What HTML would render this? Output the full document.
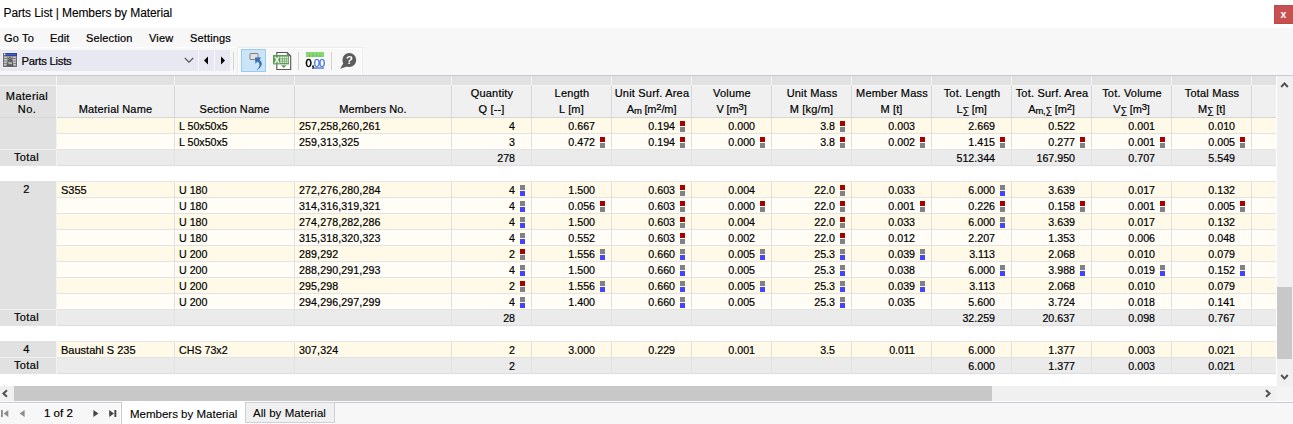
<!DOCTYPE html><html><head><meta charset="utf-8"><title>Parts List | Members by Material</title><style>
*{box-sizing:border-box;margin:0;padding:0}
html,body{width:1293px;height:424px;overflow:hidden;background:#f7f7f7}
body{position:relative;font-family:"Liberation Sans",sans-serif;font-size:11px;color:#000}
.a{position:absolute}
.t{position:absolute;white-space:pre;line-height:14px;height:14px;-webkit-text-stroke:.2px #000}
.lbl{font-size:11px;letter-spacing:.15px}
.num{font-size:10.67px;text-align:right}
.c{text-align:center}
.title{font-size:12px;letter-spacing:-.1px;-webkit-text-stroke:.1px #000}
.menu{font-size:11px;letter-spacing:.15px}
.r{background:#a80000}.g{background:#808286}.b{background:#4444ff}
.m{position:absolute;width:5px;height:5px}
.sb{font-size:9.5px;position:relative;top:1px;letter-spacing:-.3px}.sp{font-size:9.5px;position:relative;top:-3px}</style></head><body>
<div class="a" style="left:0px;top:0px;width:1293px;height:28px;background:#fff;"></div>
<div class="t title" style="left:3.5px;top:6px;">Parts List | Members by Material</div>
<div class="a" style="left:1274px;top:5px;width:19px;height:19px;background:#c75050;border:1px solid #bd4a4a;border-right:none;color:#fff;font-weight:bold;font-size:10.5px;text-align:center;line-height:17px;padding-right:1px">x</div>
<div class="t menu" style="left:4px;top:31px;">Go To</div>
<div class="t menu" style="left:50px;top:31px;">Edit</div>
<div class="t menu" style="left:86px;top:31px;">Selection</div>
<div class="t menu" style="left:149px;top:31px;">View</div>
<div class="t menu" style="left:190px;top:31px;">Settings</div>
<div class="a" style="left:0px;top:47px;width:363px;height:1px;background:#fdfdfd;"></div>
<div class="a" style="left:0px;top:50px;width:198px;height:21px;background:#e8e8f3;"></div>
<div class="a" style="left:199px;top:50px;width:15px;height:21px;background:#e8e8f3;"></div>
<div class="a" style="left:215px;top:50px;width:15px;height:21px;background:#e8e8f3;"></div>
<svg class="a" style="left:2px;top:52px" width="16" height="16" viewBox="0 0 16 16"><rect x="0" y="0" width="16" height="16" fill="#f1f1f9"/><rect x="1" y="1" width="14" height="14" fill="#6a6a6a"/><rect x="3.6" y="1" width="11.4" height="2.7" fill="#2233a8"/><rect x="4" y="1.8" width="10" height="1" fill="#4a6ad0"/><rect x="2" y="1.6" width="1.4" height="1.4" fill="#e8e8e8"/><g fill="#c2c2c2"><rect x="2" y="4.4" width="12" height="1.8"/><rect x="2" y="6.9" width="12" height="1.8"/><rect x="2" y="9.4" width="12" height="1.8"/><rect x="2" y="11.9" width="12" height="1.8"/></g><rect x="5.2" y="4" width="0.8" height="10" fill="#858585"/><rect x="10" y="4" width="0.8" height="10" fill="#858585"/><path d="M4.4 14.2 L6.2 7.2 H9.8 L11.6 14.2 Z" fill="#5a5a5a"/><circle cx="8" cy="6.2" r="1.6" fill="#5a5a5a"/><circle cx="8" cy="6.1" r="0.6" fill="#c8c8c8"/><rect x="6.6" y="9.6" width="1" height="2.6" fill="#e4e4e4"/><rect x="8.2" y="10.3" width="1.6" height="1.9" fill="#d4d4d4"/></svg>
<div class="t lbl" style="left:21.5px;top:54px;letter-spacing:-.25px;font-size:11.3px">Parts Lists</div>
<svg class="a" style="left:184px;top:57px" width="10" height="7" viewBox="0 0 10 7"><path d="M0.8 1 L5 5.2 L9.2 1" fill="none" stroke="#555" stroke-width="1.1"/></svg>
<svg class="a" style="left:203px;top:56px" width="6" height="9" viewBox="0 0 6 9"><path d="M5 0.5 L1 4.5 L5 8.5 Z" fill="#000"/></svg>
<svg class="a" style="left:220px;top:56px" width="6" height="9" viewBox="0 0 6 9"><path d="M1 0.5 L5 4.5 L1 8.5 Z" fill="#000"/></svg>
<div class="a" style="left:233px;top:52px;width:1px;height:18px;background:#d4d4d4;"></div>
<div class="a" style="left:237px;top:47px;width:126px;height:28px;background:#f8f8f8;border:1px solid #ececec;border-bottom:none;box-shadow:inset 1px 1px 0 #fff,inset -1px 0 0 #fff"></div>
<div class="a" style="left:267px;top:48px;width:1px;height:27px;background:#fff;"></div>
<div class="a" style="left:241px;top:49px;width:25px;height:23px;background:#cce4f7;border:1px solid #99ccf5"></div>
<svg class="a" style="left:241px;top:49px" width="25" height="23" viewBox="0 0 25 23"><rect x="9" y="4.5" width="8" height="6" rx="0.5" fill="#e2e2e2" stroke="#808080" stroke-width="1"/><path d="M14 8.6 L20.2 8.4 L18.5 10.7 C21.9 13.6 22.1 17.5 15.2 21.3 C19.4 17.6 19.2 14.6 16.7 12.5 L14.4 14.7 Z" fill="#3b6fb0"/></svg>
<svg class="a" style="left:272px;top:51px;will-change:transform" width="20" height="20" viewBox="0 0 20 20"><path d="M4.8 1.5 H15.3 L18.7 4.9 V18.5 H4.8 Z" fill="#fff" stroke="#555" stroke-width="1.1"/><path d="M15.3 1.8 V4.9 H18.5 Z" fill="#8a8a8a" stroke="#555" stroke-width="0.7"/><rect x="1" y="4" width="16" height="9.4" fill="#5f9956"/><text transform="translate(2.5 12.1) scale(0.8 1)" font-family="Liberation Sans,sans-serif" font-weight="bold" font-size="9.3" fill="#fff" stroke="#fff" stroke-width="0.35">X</text><rect x="8.2" y="5.6" width="8" height="6.3" fill="#e3efe0"/><g fill="#6aa262"><rect x="10" y="5.6" width="0.6" height="6.3"/><rect x="12" y="5.6" width="0.6" height="6.3"/><rect x="14" y="5.6" width="0.6" height="6.3"/><rect x="8.2" y="7.1" width="8" height="0.55"/><rect x="8.2" y="8.7" width="8" height="0.55"/><rect x="8.2" y="10.3" width="8" height="0.55"/></g><path d="M9 14.3 H14.6 L11.8 17 Z" fill="#5f9956"/></svg>
<div class="a" style="left:298px;top:52px;width:1px;height:18px;background:#d4d4d4;"></div>
<svg class="a" style="left:305px;top:51px;will-change:transform" width="20" height="19" viewBox="0 0 20 19"><rect x="1" y="1" width="18" height="5" fill="#86d676"/><g fill="#6cb85e"><rect x="4" y="3.5" width="1" height="2.5"/><rect x="7.5" y="3.5" width="1" height="2.5"/><rect x="11" y="3.5" width="1" height="2.5"/><rect x="14.5" y="3.5" width="1" height="2.5"/></g><text x="0.6" y="15.7" font-family="Liberation Sans,sans-serif" font-size="11.2" fill="#000" stroke="#000" stroke-width="0.5" letter-spacing="-0.2">0,</text><text x="8.8" y="15.7" font-family="Liberation Sans,sans-serif" font-size="11.2" fill="#3d6fe0" stroke="#3d6fe0" stroke-width="0.25" letter-spacing="-0.9">00</text><rect x="9" y="16.4" width="10" height="1.3" fill="#3d6fe0"/></svg>
<div class="a" style="left:331px;top:52px;width:1px;height:18px;background:#d4d4d4;"></div>
<svg class="a" style="left:339px;top:52px;will-change:transform" width="19" height="18" viewBox="0 0 19 18"><path d="M1 16.8 L5 10.5 L9.5 14 Z" fill="#5c5c5c"/><circle cx="10.3" cy="8" r="6.9" fill="#5c5c5c"/><text x="6.9" y="12.2" font-family="Liberation Sans,sans-serif" font-weight="bold" font-size="11.5" fill="#fff">?</text></svg>
<div class="a" style="left:0px;top:75px;width:1293px;height:1px;background:#c9c9d3;"></div>
<div class="a" style="left:0px;top:76px;width:1276px;height:310px;background:#fff;"></div>
<div class="a" style="left:0px;top:76px;width:1276px;height:9px;background:#e1e1e1;"></div>
<div class="a" style="left:0px;top:85px;width:1276px;height:32px;background:#f0f0f0;"></div>
<div class="a" style="left:0px;top:85px;width:56px;height:32px;background:#e1e1e1;"></div>
<div class="a" style="left:0px;top:117px;width:1276px;height:1px;background:#d6d6d6;"></div>
<div class="a" style="left:0px;top:85px;width:1276px;height:1px;background:#f5f5f5;"></div>
<div class="a" style="left:56px;top:76px;width:1px;height:9px;background:#f4f4f4;"></div>
<div class="a" style="left:56px;top:85px;width:1px;height:33px;background:#d9d9d9;"></div>
<div class="a" style="left:174px;top:76px;width:1px;height:9px;background:#f4f4f4;"></div>
<div class="a" style="left:174px;top:85px;width:1px;height:33px;background:#d9d9d9;"></div>
<div class="a" style="left:294px;top:76px;width:1px;height:9px;background:#f4f4f4;"></div>
<div class="a" style="left:294px;top:85px;width:1px;height:33px;background:#d9d9d9;"></div>
<div class="a" style="left:451px;top:76px;width:1px;height:9px;background:#f4f4f4;"></div>
<div class="a" style="left:451px;top:85px;width:1px;height:33px;background:#d9d9d9;"></div>
<div class="a" style="left:531px;top:76px;width:1px;height:9px;background:#f4f4f4;"></div>
<div class="a" style="left:531px;top:85px;width:1px;height:33px;background:#d9d9d9;"></div>
<div class="a" style="left:611px;top:76px;width:1px;height:9px;background:#f4f4f4;"></div>
<div class="a" style="left:611px;top:85px;width:1px;height:33px;background:#d9d9d9;"></div>
<div class="a" style="left:691px;top:76px;width:1px;height:9px;background:#f4f4f4;"></div>
<div class="a" style="left:691px;top:85px;width:1px;height:33px;background:#d9d9d9;"></div>
<div class="a" style="left:771px;top:76px;width:1px;height:9px;background:#f4f4f4;"></div>
<div class="a" style="left:771px;top:85px;width:1px;height:33px;background:#d9d9d9;"></div>
<div class="a" style="left:851px;top:76px;width:1px;height:9px;background:#f4f4f4;"></div>
<div class="a" style="left:851px;top:85px;width:1px;height:33px;background:#d9d9d9;"></div>
<div class="a" style="left:931px;top:76px;width:1px;height:9px;background:#f4f4f4;"></div>
<div class="a" style="left:931px;top:85px;width:1px;height:33px;background:#d9d9d9;"></div>
<div class="a" style="left:1011px;top:76px;width:1px;height:9px;background:#f4f4f4;"></div>
<div class="a" style="left:1011px;top:85px;width:1px;height:33px;background:#d9d9d9;"></div>
<div class="a" style="left:1091px;top:76px;width:1px;height:9px;background:#f4f4f4;"></div>
<div class="a" style="left:1091px;top:85px;width:1px;height:33px;background:#d9d9d9;"></div>
<div class="a" style="left:1171px;top:76px;width:1px;height:9px;background:#f4f4f4;"></div>
<div class="a" style="left:1171px;top:85px;width:1px;height:33px;background:#d9d9d9;"></div>
<div class="a" style="left:1251px;top:76px;width:1px;height:9px;background:#f4f4f4;"></div>
<div class="a" style="left:1251px;top:85px;width:1px;height:33px;background:#d9d9d9;"></div>
<div class="a" style="left:56px;top:76px;width:1px;height:42px;background:#f6f6f6;"></div>
<div class="t lbl c" style="left:0px;top:89px;width:54px;letter-spacing:.4px">Material</div>
<div class="t lbl c" style="left:0px;top:102px;width:54px;letter-spacing:.4px">No.</div>
<div class="t lbl c" style="left:57px;top:102px;width:117px;">Material Name</div>
<div class="t lbl c" style="left:175px;top:102px;width:119px;letter-spacing:.08px">Section Name</div>
<div class="t lbl c" style="left:295px;top:102px;width:156px;">Members No.</div>
<div class="t lbl c" style="left:452.5px;top:86px;width:79px;letter-spacing:.2px">Quantity</div>
<div class="t lbl c" style="left:452px;top:102px;width:79px;">Q [--]</div>
<div class="t lbl c" style="left:532.5px;top:86px;width:79px;letter-spacing:.2px">Length</div>
<div class="t lbl c" style="left:532px;top:102px;width:79px;">L [m]</div>
<div class="t lbl c" style="left:612.5px;top:86px;width:79px;letter-spacing:.2px">Unit Surf. Area</div>
<div class="t lbl c" style="left:612px;top:102px;width:79px;letter-spacing:-.15px">A<span class='sb'>m</span> [m<span class='sp'>2</span>/m]</div>
<div class="t lbl c" style="left:692.5px;top:86px;width:79px;letter-spacing:.2px">Volume</div>
<div class="t lbl c" style="left:692px;top:102px;width:79px;letter-spacing:-.15px">V [m<span class='sp'>3</span>]</div>
<div class="t lbl c" style="left:772.5px;top:86px;width:79px;letter-spacing:.2px">Unit Mass</div>
<div class="t lbl c" style="left:772px;top:102px;width:79px;">M [kg/m]</div>
<div class="t lbl c" style="left:852.5px;top:86px;width:79px;letter-spacing:.2px">Member Mass</div>
<div class="t lbl c" style="left:852px;top:102px;width:79px;">M [t]</div>
<div class="t lbl c" style="left:932.5px;top:86px;width:79px;letter-spacing:.2px">Tot. Length</div>
<div class="t lbl c" style="left:932px;top:102px;width:79px;letter-spacing:-.15px">L<span class='sb'>&#8721;</span> [m]</div>
<div class="t lbl c" style="left:1012.5px;top:86px;width:79px;letter-spacing:.2px">Tot. Surf. Area</div>
<div class="t lbl c" style="left:1012px;top:102px;width:79px;letter-spacing:-.15px">A<span class='sb'>m,&#8721;</span> [m<span class='sp'>2</span>]</div>
<div class="t lbl c" style="left:1092.5px;top:86px;width:79px;letter-spacing:.2px">Tot. Volume</div>
<div class="t lbl c" style="left:1092px;top:102px;width:79px;letter-spacing:-.15px">V<span class='sb'>&#8721;</span> [m<span class='sp'>3</span>]</div>
<div class="t lbl c" style="left:1172.5px;top:86px;width:79px;letter-spacing:.2px">Total Mass</div>
<div class="t lbl c" style="left:1172px;top:102px;width:79px;letter-spacing:-.15px">M<span class='sb'>&#8721;</span> [t]</div>
<div class="a" style="left:57px;top:118px;width:1219px;height:15px;background:#fffae8;"></div>
<div class="a" style="left:57px;top:133px;width:1219px;height:1px;background:#e3e3e6;"></div>
<div class="a" style="left:0px;top:118px;width:56px;height:16px;background:#e1e1e1;"></div>
<div class="a" style="left:56px;top:118px;width:1px;height:16px;background:#f2f2f2;"></div>
<div class="a" style="left:174px;top:118px;width:1px;height:16px;background:#e2e2e2;"></div>
<div class="a" style="left:294px;top:118px;width:1px;height:16px;background:#e2e2e2;"></div>
<div class="a" style="left:451px;top:118px;width:1px;height:16px;background:#e2e2e2;"></div>
<div class="a" style="left:531px;top:118px;width:1px;height:16px;background:#e2e2e2;"></div>
<div class="a" style="left:611px;top:118px;width:1px;height:16px;background:#e2e2e2;"></div>
<div class="a" style="left:691px;top:118px;width:1px;height:16px;background:#e2e2e2;"></div>
<div class="a" style="left:771px;top:118px;width:1px;height:16px;background:#e2e2e2;"></div>
<div class="a" style="left:851px;top:118px;width:1px;height:16px;background:#e2e2e2;"></div>
<div class="a" style="left:931px;top:118px;width:1px;height:16px;background:#e2e2e2;"></div>
<div class="a" style="left:1011px;top:118px;width:1px;height:16px;background:#e2e2e2;"></div>
<div class="a" style="left:1091px;top:118px;width:1px;height:16px;background:#e2e2e2;"></div>
<div class="a" style="left:1171px;top:118px;width:1px;height:16px;background:#e2e2e2;"></div>
<div class="a" style="left:1251px;top:118px;width:1px;height:16px;background:#e2e2e2;"></div>
<div class="t lbl" style="left:179px;top:119px;letter-spacing:0;font-size:10.67px">L 50x50x5</div>
<div class="t lbl" style="left:299px;top:119px;letter-spacing:.1px;font-size:10.67px">257,258,260,261</div>
<div class="t num" style="left:452px;top:119px;width:63px;">4</div>
<div class="t num" style="left:532px;top:119px;width:63px;">0.667</div>
<div class="t num" style="left:612px;top:119px;width:63px;">0.194</div>
<div class="m r" style="left:680px;top:121px"></div><div class="m g" style="left:680px;top:127px"></div>
<div class="t num" style="left:692px;top:119px;width:63px;">0.000</div>
<div class="t num" style="left:772px;top:119px;width:63px;">3.8</div>
<div class="m r" style="left:840px;top:121px"></div><div class="m g" style="left:840px;top:127px"></div>
<div class="t num" style="left:852px;top:119px;width:63px;">0.003</div>
<div class="t num" style="left:932px;top:119px;width:63px;">2.669</div>
<div class="t num" style="left:1012px;top:119px;width:63px;">0.522</div>
<div class="t num" style="left:1092px;top:119px;width:63px;">0.001</div>
<div class="t num" style="left:1172px;top:119px;width:63px;">0.010</div>
<div class="a" style="left:57px;top:134px;width:1219px;height:15px;background:#fffdf5;"></div>
<div class="a" style="left:57px;top:149px;width:1219px;height:1px;background:#e3e3e6;"></div>
<div class="a" style="left:0px;top:134px;width:56px;height:16px;background:#e1e1e1;"></div>
<div class="a" style="left:56px;top:134px;width:1px;height:16px;background:#f2f2f2;"></div>
<div class="a" style="left:174px;top:134px;width:1px;height:16px;background:#e2e2e2;"></div>
<div class="a" style="left:294px;top:134px;width:1px;height:16px;background:#e2e2e2;"></div>
<div class="a" style="left:451px;top:134px;width:1px;height:16px;background:#e2e2e2;"></div>
<div class="a" style="left:531px;top:134px;width:1px;height:16px;background:#e2e2e2;"></div>
<div class="a" style="left:611px;top:134px;width:1px;height:16px;background:#e2e2e2;"></div>
<div class="a" style="left:691px;top:134px;width:1px;height:16px;background:#e2e2e2;"></div>
<div class="a" style="left:771px;top:134px;width:1px;height:16px;background:#e2e2e2;"></div>
<div class="a" style="left:851px;top:134px;width:1px;height:16px;background:#e2e2e2;"></div>
<div class="a" style="left:931px;top:134px;width:1px;height:16px;background:#e2e2e2;"></div>
<div class="a" style="left:1011px;top:134px;width:1px;height:16px;background:#e2e2e2;"></div>
<div class="a" style="left:1091px;top:134px;width:1px;height:16px;background:#e2e2e2;"></div>
<div class="a" style="left:1171px;top:134px;width:1px;height:16px;background:#e2e2e2;"></div>
<div class="a" style="left:1251px;top:134px;width:1px;height:16px;background:#e2e2e2;"></div>
<div class="t lbl" style="left:179px;top:135px;letter-spacing:0;font-size:10.67px">L 50x50x5</div>
<div class="t lbl" style="left:299px;top:135px;letter-spacing:.1px;font-size:10.67px">259,313,325</div>
<div class="t num" style="left:452px;top:135px;width:63px;">3</div>
<div class="t num" style="left:532px;top:135px;width:63px;">0.472</div>
<div class="m r" style="left:600px;top:137px"></div><div class="m g" style="left:600px;top:143px"></div>
<div class="t num" style="left:612px;top:135px;width:63px;">0.194</div>
<div class="m r" style="left:680px;top:137px"></div><div class="m g" style="left:680px;top:143px"></div>
<div class="t num" style="left:692px;top:135px;width:63px;">0.000</div>
<div class="m r" style="left:760px;top:137px"></div><div class="m g" style="left:760px;top:143px"></div>
<div class="t num" style="left:772px;top:135px;width:63px;">3.8</div>
<div class="m r" style="left:840px;top:137px"></div><div class="m g" style="left:840px;top:143px"></div>
<div class="t num" style="left:852px;top:135px;width:63px;">0.002</div>
<div class="m r" style="left:920px;top:137px"></div><div class="m g" style="left:920px;top:143px"></div>
<div class="t num" style="left:932px;top:135px;width:63px;">1.415</div>
<div class="m r" style="left:1000px;top:137px"></div><div class="m g" style="left:1000px;top:143px"></div>
<div class="t num" style="left:1012px;top:135px;width:63px;">0.277</div>
<div class="m r" style="left:1080px;top:137px"></div><div class="m g" style="left:1080px;top:143px"></div>
<div class="t num" style="left:1092px;top:135px;width:63px;">0.001</div>
<div class="m r" style="left:1160px;top:137px"></div><div class="m g" style="left:1160px;top:143px"></div>
<div class="t num" style="left:1172px;top:135px;width:63px;">0.005</div>
<div class="m r" style="left:1240px;top:137px"></div><div class="m g" style="left:1240px;top:143px"></div>
<div class="a" style="left:57px;top:150px;width:1219px;height:15px;background:#ebebeb;"></div>
<div class="a" style="left:57px;top:165px;width:1219px;height:1px;background:#e3e3e6;"></div>
<div class="a" style="left:0px;top:150px;width:56px;height:16px;background:#e1e1e1;"></div>
<div class="a" style="left:56px;top:150px;width:1px;height:16px;background:#f2f2f2;"></div>
<div class="a" style="left:0px;top:149px;width:56px;height:1px;background:#efefef;"></div>
<div class="a" style="left:57px;top:165px;width:1219px;height:1px;background:#dedee0;"></div>
<div class="a" style="left:174px;top:150px;width:1px;height:16px;background:#e2e2e2;"></div>
<div class="a" style="left:294px;top:150px;width:1px;height:16px;background:#e2e2e2;"></div>
<div class="a" style="left:451px;top:150px;width:1px;height:16px;background:#e2e2e2;"></div>
<div class="a" style="left:531px;top:150px;width:1px;height:16px;background:#e2e2e2;"></div>
<div class="a" style="left:611px;top:150px;width:1px;height:16px;background:#e2e2e2;"></div>
<div class="a" style="left:691px;top:150px;width:1px;height:16px;background:#e2e2e2;"></div>
<div class="a" style="left:771px;top:150px;width:1px;height:16px;background:#e2e2e2;"></div>
<div class="a" style="left:851px;top:150px;width:1px;height:16px;background:#e2e2e2;"></div>
<div class="a" style="left:931px;top:150px;width:1px;height:16px;background:#e2e2e2;"></div>
<div class="a" style="left:1011px;top:150px;width:1px;height:16px;background:#e2e2e2;"></div>
<div class="a" style="left:1091px;top:150px;width:1px;height:16px;background:#e2e2e2;"></div>
<div class="a" style="left:1171px;top:150px;width:1px;height:16px;background:#e2e2e2;"></div>
<div class="a" style="left:1251px;top:150px;width:1px;height:16px;background:#e2e2e2;"></div>
<div class="t lbl c" style="left:0px;top:150px;width:53px;letter-spacing:.4px">Total</div>
<div class="t num" style="left:452px;top:151px;width:63px;">278</div>
<div class="t num" style="left:932px;top:151px;width:63px;">512.344</div>
<div class="t num" style="left:1012px;top:151px;width:63px;">167.950</div>
<div class="t num" style="left:1092px;top:151px;width:63px;">0.707</div>
<div class="t num" style="left:1172px;top:151px;width:63px;">5.549</div>
<div class="a" style="left:0px;top:181px;width:56px;height:1px;background:#e1e1e1;"></div>
<div class="a" style="left:57px;top:181px;width:1219px;height:1px;background:#e6e6e8;"></div>
<div class="a" style="left:57px;top:182px;width:1219px;height:15px;background:#fffae8;"></div>
<div class="a" style="left:57px;top:197px;width:1219px;height:1px;background:#e3e3e6;"></div>
<div class="a" style="left:0px;top:182px;width:56px;height:16px;background:#e1e1e1;"></div>
<div class="a" style="left:56px;top:182px;width:1px;height:16px;background:#f2f2f2;"></div>
<div class="a" style="left:174px;top:182px;width:1px;height:16px;background:#e2e2e2;"></div>
<div class="a" style="left:294px;top:182px;width:1px;height:16px;background:#e2e2e2;"></div>
<div class="a" style="left:451px;top:182px;width:1px;height:16px;background:#e2e2e2;"></div>
<div class="a" style="left:531px;top:182px;width:1px;height:16px;background:#e2e2e2;"></div>
<div class="a" style="left:611px;top:182px;width:1px;height:16px;background:#e2e2e2;"></div>
<div class="a" style="left:691px;top:182px;width:1px;height:16px;background:#e2e2e2;"></div>
<div class="a" style="left:771px;top:182px;width:1px;height:16px;background:#e2e2e2;"></div>
<div class="a" style="left:851px;top:182px;width:1px;height:16px;background:#e2e2e2;"></div>
<div class="a" style="left:931px;top:182px;width:1px;height:16px;background:#e2e2e2;"></div>
<div class="a" style="left:1011px;top:182px;width:1px;height:16px;background:#e2e2e2;"></div>
<div class="a" style="left:1091px;top:182px;width:1px;height:16px;background:#e2e2e2;"></div>
<div class="a" style="left:1171px;top:182px;width:1px;height:16px;background:#e2e2e2;"></div>
<div class="a" style="left:1251px;top:182px;width:1px;height:16px;background:#e2e2e2;"></div>
<div class="t lbl c" style="left:0px;top:182px;width:53px;letter-spacing:.4px">2</div>
<div class="t lbl" style="left:61px;top:183px;letter-spacing:0">S355</div>
<div class="t lbl" style="left:179px;top:183px;letter-spacing:0;font-size:10.67px">U 180</div>
<div class="t lbl" style="left:299px;top:183px;letter-spacing:.1px;font-size:10.67px">272,276,280,284</div>
<div class="t num" style="left:452px;top:183px;width:63px;">4</div>
<div class="m g" style="left:520px;top:185px"></div><div class="m b" style="left:520px;top:191px"></div>
<div class="t num" style="left:532px;top:183px;width:63px;">1.500</div>
<div class="t num" style="left:612px;top:183px;width:63px;">0.603</div>
<div class="m r" style="left:680px;top:185px"></div><div class="m g" style="left:680px;top:191px"></div>
<div class="t num" style="left:692px;top:183px;width:63px;">0.004</div>
<div class="t num" style="left:772px;top:183px;width:63px;">22.0</div>
<div class="m r" style="left:840px;top:185px"></div><div class="m g" style="left:840px;top:191px"></div>
<div class="t num" style="left:852px;top:183px;width:63px;">0.033</div>
<div class="t num" style="left:932px;top:183px;width:63px;">6.000</div>
<div class="m g" style="left:1000px;top:185px"></div><div class="m b" style="left:1000px;top:191px"></div>
<div class="t num" style="left:1012px;top:183px;width:63px;">3.639</div>
<div class="t num" style="left:1092px;top:183px;width:63px;">0.017</div>
<div class="t num" style="left:1172px;top:183px;width:63px;">0.132</div>
<div class="a" style="left:57px;top:198px;width:1219px;height:15px;background:#fffdf5;"></div>
<div class="a" style="left:57px;top:213px;width:1219px;height:1px;background:#e3e3e6;"></div>
<div class="a" style="left:0px;top:198px;width:56px;height:16px;background:#e1e1e1;"></div>
<div class="a" style="left:56px;top:198px;width:1px;height:16px;background:#f2f2f2;"></div>
<div class="a" style="left:174px;top:198px;width:1px;height:16px;background:#e2e2e2;"></div>
<div class="a" style="left:294px;top:198px;width:1px;height:16px;background:#e2e2e2;"></div>
<div class="a" style="left:451px;top:198px;width:1px;height:16px;background:#e2e2e2;"></div>
<div class="a" style="left:531px;top:198px;width:1px;height:16px;background:#e2e2e2;"></div>
<div class="a" style="left:611px;top:198px;width:1px;height:16px;background:#e2e2e2;"></div>
<div class="a" style="left:691px;top:198px;width:1px;height:16px;background:#e2e2e2;"></div>
<div class="a" style="left:771px;top:198px;width:1px;height:16px;background:#e2e2e2;"></div>
<div class="a" style="left:851px;top:198px;width:1px;height:16px;background:#e2e2e2;"></div>
<div class="a" style="left:931px;top:198px;width:1px;height:16px;background:#e2e2e2;"></div>
<div class="a" style="left:1011px;top:198px;width:1px;height:16px;background:#e2e2e2;"></div>
<div class="a" style="left:1091px;top:198px;width:1px;height:16px;background:#e2e2e2;"></div>
<div class="a" style="left:1171px;top:198px;width:1px;height:16px;background:#e2e2e2;"></div>
<div class="a" style="left:1251px;top:198px;width:1px;height:16px;background:#e2e2e2;"></div>
<div class="t lbl" style="left:179px;top:199px;letter-spacing:0;font-size:10.67px">U 180</div>
<div class="t lbl" style="left:299px;top:199px;letter-spacing:.1px;font-size:10.67px">314,316,319,321</div>
<div class="t num" style="left:452px;top:199px;width:63px;">4</div>
<div class="m g" style="left:520px;top:201px"></div><div class="m b" style="left:520px;top:207px"></div>
<div class="t num" style="left:532px;top:199px;width:63px;">0.056</div>
<div class="m r" style="left:600px;top:201px"></div><div class="m g" style="left:600px;top:207px"></div>
<div class="t num" style="left:612px;top:199px;width:63px;">0.603</div>
<div class="m r" style="left:680px;top:201px"></div><div class="m g" style="left:680px;top:207px"></div>
<div class="t num" style="left:692px;top:199px;width:63px;">0.000</div>
<div class="m r" style="left:760px;top:201px"></div><div class="m g" style="left:760px;top:207px"></div>
<div class="t num" style="left:772px;top:199px;width:63px;">22.0</div>
<div class="m r" style="left:840px;top:201px"></div><div class="m g" style="left:840px;top:207px"></div>
<div class="t num" style="left:852px;top:199px;width:63px;">0.001</div>
<div class="m r" style="left:920px;top:201px"></div><div class="m g" style="left:920px;top:207px"></div>
<div class="t num" style="left:932px;top:199px;width:63px;">0.226</div>
<div class="m r" style="left:1000px;top:201px"></div><div class="m g" style="left:1000px;top:207px"></div>
<div class="t num" style="left:1012px;top:199px;width:63px;">0.158</div>
<div class="m r" style="left:1080px;top:201px"></div><div class="m g" style="left:1080px;top:207px"></div>
<div class="t num" style="left:1092px;top:199px;width:63px;">0.001</div>
<div class="m r" style="left:1160px;top:201px"></div><div class="m g" style="left:1160px;top:207px"></div>
<div class="t num" style="left:1172px;top:199px;width:63px;">0.005</div>
<div class="m r" style="left:1240px;top:201px"></div><div class="m g" style="left:1240px;top:207px"></div>
<div class="a" style="left:57px;top:214px;width:1219px;height:15px;background:#fffae8;"></div>
<div class="a" style="left:57px;top:229px;width:1219px;height:1px;background:#e3e3e6;"></div>
<div class="a" style="left:0px;top:214px;width:56px;height:16px;background:#e1e1e1;"></div>
<div class="a" style="left:56px;top:214px;width:1px;height:16px;background:#f2f2f2;"></div>
<div class="a" style="left:174px;top:214px;width:1px;height:16px;background:#e2e2e2;"></div>
<div class="a" style="left:294px;top:214px;width:1px;height:16px;background:#e2e2e2;"></div>
<div class="a" style="left:451px;top:214px;width:1px;height:16px;background:#e2e2e2;"></div>
<div class="a" style="left:531px;top:214px;width:1px;height:16px;background:#e2e2e2;"></div>
<div class="a" style="left:611px;top:214px;width:1px;height:16px;background:#e2e2e2;"></div>
<div class="a" style="left:691px;top:214px;width:1px;height:16px;background:#e2e2e2;"></div>
<div class="a" style="left:771px;top:214px;width:1px;height:16px;background:#e2e2e2;"></div>
<div class="a" style="left:851px;top:214px;width:1px;height:16px;background:#e2e2e2;"></div>
<div class="a" style="left:931px;top:214px;width:1px;height:16px;background:#e2e2e2;"></div>
<div class="a" style="left:1011px;top:214px;width:1px;height:16px;background:#e2e2e2;"></div>
<div class="a" style="left:1091px;top:214px;width:1px;height:16px;background:#e2e2e2;"></div>
<div class="a" style="left:1171px;top:214px;width:1px;height:16px;background:#e2e2e2;"></div>
<div class="a" style="left:1251px;top:214px;width:1px;height:16px;background:#e2e2e2;"></div>
<div class="t lbl" style="left:179px;top:215px;letter-spacing:0;font-size:10.67px">U 180</div>
<div class="t lbl" style="left:299px;top:215px;letter-spacing:.1px;font-size:10.67px">274,278,282,286</div>
<div class="t num" style="left:452px;top:215px;width:63px;">4</div>
<div class="m g" style="left:520px;top:217px"></div><div class="m b" style="left:520px;top:223px"></div>
<div class="t num" style="left:532px;top:215px;width:63px;">1.500</div>
<div class="t num" style="left:612px;top:215px;width:63px;">0.603</div>
<div class="m r" style="left:680px;top:217px"></div><div class="m g" style="left:680px;top:223px"></div>
<div class="t num" style="left:692px;top:215px;width:63px;">0.004</div>
<div class="t num" style="left:772px;top:215px;width:63px;">22.0</div>
<div class="m r" style="left:840px;top:217px"></div><div class="m g" style="left:840px;top:223px"></div>
<div class="t num" style="left:852px;top:215px;width:63px;">0.033</div>
<div class="t num" style="left:932px;top:215px;width:63px;">6.000</div>
<div class="m g" style="left:1000px;top:217px"></div><div class="m b" style="left:1000px;top:223px"></div>
<div class="t num" style="left:1012px;top:215px;width:63px;">3.639</div>
<div class="t num" style="left:1092px;top:215px;width:63px;">0.017</div>
<div class="t num" style="left:1172px;top:215px;width:63px;">0.132</div>
<div class="a" style="left:57px;top:230px;width:1219px;height:15px;background:#fffdf5;"></div>
<div class="a" style="left:57px;top:245px;width:1219px;height:1px;background:#e3e3e6;"></div>
<div class="a" style="left:0px;top:230px;width:56px;height:16px;background:#e1e1e1;"></div>
<div class="a" style="left:56px;top:230px;width:1px;height:16px;background:#f2f2f2;"></div>
<div class="a" style="left:174px;top:230px;width:1px;height:16px;background:#e2e2e2;"></div>
<div class="a" style="left:294px;top:230px;width:1px;height:16px;background:#e2e2e2;"></div>
<div class="a" style="left:451px;top:230px;width:1px;height:16px;background:#e2e2e2;"></div>
<div class="a" style="left:531px;top:230px;width:1px;height:16px;background:#e2e2e2;"></div>
<div class="a" style="left:611px;top:230px;width:1px;height:16px;background:#e2e2e2;"></div>
<div class="a" style="left:691px;top:230px;width:1px;height:16px;background:#e2e2e2;"></div>
<div class="a" style="left:771px;top:230px;width:1px;height:16px;background:#e2e2e2;"></div>
<div class="a" style="left:851px;top:230px;width:1px;height:16px;background:#e2e2e2;"></div>
<div class="a" style="left:931px;top:230px;width:1px;height:16px;background:#e2e2e2;"></div>
<div class="a" style="left:1011px;top:230px;width:1px;height:16px;background:#e2e2e2;"></div>
<div class="a" style="left:1091px;top:230px;width:1px;height:16px;background:#e2e2e2;"></div>
<div class="a" style="left:1171px;top:230px;width:1px;height:16px;background:#e2e2e2;"></div>
<div class="a" style="left:1251px;top:230px;width:1px;height:16px;background:#e2e2e2;"></div>
<div class="t lbl" style="left:179px;top:231px;letter-spacing:0;font-size:10.67px">U 180</div>
<div class="t lbl" style="left:299px;top:231px;letter-spacing:.1px;font-size:10.67px">315,318,320,323</div>
<div class="t num" style="left:452px;top:231px;width:63px;">4</div>
<div class="m g" style="left:520px;top:233px"></div><div class="m b" style="left:520px;top:239px"></div>
<div class="t num" style="left:532px;top:231px;width:63px;">0.552</div>
<div class="t num" style="left:612px;top:231px;width:63px;">0.603</div>
<div class="m r" style="left:680px;top:233px"></div><div class="m g" style="left:680px;top:239px"></div>
<div class="t num" style="left:692px;top:231px;width:63px;">0.002</div>
<div class="t num" style="left:772px;top:231px;width:63px;">22.0</div>
<div class="m r" style="left:840px;top:233px"></div><div class="m g" style="left:840px;top:239px"></div>
<div class="t num" style="left:852px;top:231px;width:63px;">0.012</div>
<div class="t num" style="left:932px;top:231px;width:63px;">2.207</div>
<div class="t num" style="left:1012px;top:231px;width:63px;">1.353</div>
<div class="t num" style="left:1092px;top:231px;width:63px;">0.006</div>
<div class="t num" style="left:1172px;top:231px;width:63px;">0.048</div>
<div class="a" style="left:57px;top:246px;width:1219px;height:15px;background:#fffae8;"></div>
<div class="a" style="left:57px;top:261px;width:1219px;height:1px;background:#e3e3e6;"></div>
<div class="a" style="left:0px;top:246px;width:56px;height:16px;background:#e1e1e1;"></div>
<div class="a" style="left:56px;top:246px;width:1px;height:16px;background:#f2f2f2;"></div>
<div class="a" style="left:174px;top:246px;width:1px;height:16px;background:#e2e2e2;"></div>
<div class="a" style="left:294px;top:246px;width:1px;height:16px;background:#e2e2e2;"></div>
<div class="a" style="left:451px;top:246px;width:1px;height:16px;background:#e2e2e2;"></div>
<div class="a" style="left:531px;top:246px;width:1px;height:16px;background:#e2e2e2;"></div>
<div class="a" style="left:611px;top:246px;width:1px;height:16px;background:#e2e2e2;"></div>
<div class="a" style="left:691px;top:246px;width:1px;height:16px;background:#e2e2e2;"></div>
<div class="a" style="left:771px;top:246px;width:1px;height:16px;background:#e2e2e2;"></div>
<div class="a" style="left:851px;top:246px;width:1px;height:16px;background:#e2e2e2;"></div>
<div class="a" style="left:931px;top:246px;width:1px;height:16px;background:#e2e2e2;"></div>
<div class="a" style="left:1011px;top:246px;width:1px;height:16px;background:#e2e2e2;"></div>
<div class="a" style="left:1091px;top:246px;width:1px;height:16px;background:#e2e2e2;"></div>
<div class="a" style="left:1171px;top:246px;width:1px;height:16px;background:#e2e2e2;"></div>
<div class="a" style="left:1251px;top:246px;width:1px;height:16px;background:#e2e2e2;"></div>
<div class="t lbl" style="left:179px;top:247px;letter-spacing:0;font-size:10.67px">U 200</div>
<div class="t lbl" style="left:299px;top:247px;letter-spacing:.1px;font-size:10.67px">289,292</div>
<div class="t num" style="left:452px;top:247px;width:63px;">2</div>
<div class="m r" style="left:520px;top:249px"></div><div class="m g" style="left:520px;top:255px"></div>
<div class="t num" style="left:532px;top:247px;width:63px;">1.556</div>
<div class="m g" style="left:600px;top:249px"></div><div class="m b" style="left:600px;top:255px"></div>
<div class="t num" style="left:612px;top:247px;width:63px;">0.660</div>
<div class="m g" style="left:680px;top:249px"></div><div class="m b" style="left:680px;top:255px"></div>
<div class="t num" style="left:692px;top:247px;width:63px;">0.005</div>
<div class="m g" style="left:760px;top:249px"></div><div class="m b" style="left:760px;top:255px"></div>
<div class="t num" style="left:772px;top:247px;width:63px;">25.3</div>
<div class="m g" style="left:840px;top:249px"></div><div class="m b" style="left:840px;top:255px"></div>
<div class="t num" style="left:852px;top:247px;width:63px;">0.039</div>
<div class="m g" style="left:920px;top:249px"></div><div class="m b" style="left:920px;top:255px"></div>
<div class="t num" style="left:932px;top:247px;width:63px;">3.113</div>
<div class="t num" style="left:1012px;top:247px;width:63px;">2.068</div>
<div class="t num" style="left:1092px;top:247px;width:63px;">0.010</div>
<div class="t num" style="left:1172px;top:247px;width:63px;">0.079</div>
<div class="a" style="left:57px;top:262px;width:1219px;height:15px;background:#fffdf5;"></div>
<div class="a" style="left:57px;top:277px;width:1219px;height:1px;background:#e3e3e6;"></div>
<div class="a" style="left:0px;top:262px;width:56px;height:16px;background:#e1e1e1;"></div>
<div class="a" style="left:56px;top:262px;width:1px;height:16px;background:#f2f2f2;"></div>
<div class="a" style="left:174px;top:262px;width:1px;height:16px;background:#e2e2e2;"></div>
<div class="a" style="left:294px;top:262px;width:1px;height:16px;background:#e2e2e2;"></div>
<div class="a" style="left:451px;top:262px;width:1px;height:16px;background:#e2e2e2;"></div>
<div class="a" style="left:531px;top:262px;width:1px;height:16px;background:#e2e2e2;"></div>
<div class="a" style="left:611px;top:262px;width:1px;height:16px;background:#e2e2e2;"></div>
<div class="a" style="left:691px;top:262px;width:1px;height:16px;background:#e2e2e2;"></div>
<div class="a" style="left:771px;top:262px;width:1px;height:16px;background:#e2e2e2;"></div>
<div class="a" style="left:851px;top:262px;width:1px;height:16px;background:#e2e2e2;"></div>
<div class="a" style="left:931px;top:262px;width:1px;height:16px;background:#e2e2e2;"></div>
<div class="a" style="left:1011px;top:262px;width:1px;height:16px;background:#e2e2e2;"></div>
<div class="a" style="left:1091px;top:262px;width:1px;height:16px;background:#e2e2e2;"></div>
<div class="a" style="left:1171px;top:262px;width:1px;height:16px;background:#e2e2e2;"></div>
<div class="a" style="left:1251px;top:262px;width:1px;height:16px;background:#e2e2e2;"></div>
<div class="t lbl" style="left:179px;top:263px;letter-spacing:0;font-size:10.67px">U 200</div>
<div class="t lbl" style="left:299px;top:263px;letter-spacing:.1px;font-size:10.67px">288,290,291,293</div>
<div class="t num" style="left:452px;top:263px;width:63px;">4</div>
<div class="m g" style="left:520px;top:265px"></div><div class="m b" style="left:520px;top:271px"></div>
<div class="t num" style="left:532px;top:263px;width:63px;">1.500</div>
<div class="t num" style="left:612px;top:263px;width:63px;">0.660</div>
<div class="m g" style="left:680px;top:265px"></div><div class="m b" style="left:680px;top:271px"></div>
<div class="t num" style="left:692px;top:263px;width:63px;">0.005</div>
<div class="t num" style="left:772px;top:263px;width:63px;">25.3</div>
<div class="m g" style="left:840px;top:265px"></div><div class="m b" style="left:840px;top:271px"></div>
<div class="t num" style="left:852px;top:263px;width:63px;">0.038</div>
<div class="t num" style="left:932px;top:263px;width:63px;">6.000</div>
<div class="m g" style="left:1000px;top:265px"></div><div class="m b" style="left:1000px;top:271px"></div>
<div class="t num" style="left:1012px;top:263px;width:63px;">3.988</div>
<div class="m g" style="left:1080px;top:265px"></div><div class="m b" style="left:1080px;top:271px"></div>
<div class="t num" style="left:1092px;top:263px;width:63px;">0.019</div>
<div class="m g" style="left:1160px;top:265px"></div><div class="m b" style="left:1160px;top:271px"></div>
<div class="t num" style="left:1172px;top:263px;width:63px;">0.152</div>
<div class="m g" style="left:1240px;top:265px"></div><div class="m b" style="left:1240px;top:271px"></div>
<div class="a" style="left:57px;top:278px;width:1219px;height:15px;background:#fffae8;"></div>
<div class="a" style="left:57px;top:293px;width:1219px;height:1px;background:#e3e3e6;"></div>
<div class="a" style="left:0px;top:278px;width:56px;height:16px;background:#e1e1e1;"></div>
<div class="a" style="left:56px;top:278px;width:1px;height:16px;background:#f2f2f2;"></div>
<div class="a" style="left:174px;top:278px;width:1px;height:16px;background:#e2e2e2;"></div>
<div class="a" style="left:294px;top:278px;width:1px;height:16px;background:#e2e2e2;"></div>
<div class="a" style="left:451px;top:278px;width:1px;height:16px;background:#e2e2e2;"></div>
<div class="a" style="left:531px;top:278px;width:1px;height:16px;background:#e2e2e2;"></div>
<div class="a" style="left:611px;top:278px;width:1px;height:16px;background:#e2e2e2;"></div>
<div class="a" style="left:691px;top:278px;width:1px;height:16px;background:#e2e2e2;"></div>
<div class="a" style="left:771px;top:278px;width:1px;height:16px;background:#e2e2e2;"></div>
<div class="a" style="left:851px;top:278px;width:1px;height:16px;background:#e2e2e2;"></div>
<div class="a" style="left:931px;top:278px;width:1px;height:16px;background:#e2e2e2;"></div>
<div class="a" style="left:1011px;top:278px;width:1px;height:16px;background:#e2e2e2;"></div>
<div class="a" style="left:1091px;top:278px;width:1px;height:16px;background:#e2e2e2;"></div>
<div class="a" style="left:1171px;top:278px;width:1px;height:16px;background:#e2e2e2;"></div>
<div class="a" style="left:1251px;top:278px;width:1px;height:16px;background:#e2e2e2;"></div>
<div class="t lbl" style="left:179px;top:279px;letter-spacing:0;font-size:10.67px">U 200</div>
<div class="t lbl" style="left:299px;top:279px;letter-spacing:.1px;font-size:10.67px">295,298</div>
<div class="t num" style="left:452px;top:279px;width:63px;">2</div>
<div class="m r" style="left:520px;top:281px"></div><div class="m g" style="left:520px;top:287px"></div>
<div class="t num" style="left:532px;top:279px;width:63px;">1.556</div>
<div class="m g" style="left:600px;top:281px"></div><div class="m b" style="left:600px;top:287px"></div>
<div class="t num" style="left:612px;top:279px;width:63px;">0.660</div>
<div class="m g" style="left:680px;top:281px"></div><div class="m b" style="left:680px;top:287px"></div>
<div class="t num" style="left:692px;top:279px;width:63px;">0.005</div>
<div class="m g" style="left:760px;top:281px"></div><div class="m b" style="left:760px;top:287px"></div>
<div class="t num" style="left:772px;top:279px;width:63px;">25.3</div>
<div class="m g" style="left:840px;top:281px"></div><div class="m b" style="left:840px;top:287px"></div>
<div class="t num" style="left:852px;top:279px;width:63px;">0.039</div>
<div class="m g" style="left:920px;top:281px"></div><div class="m b" style="left:920px;top:287px"></div>
<div class="t num" style="left:932px;top:279px;width:63px;">3.113</div>
<div class="t num" style="left:1012px;top:279px;width:63px;">2.068</div>
<div class="t num" style="left:1092px;top:279px;width:63px;">0.010</div>
<div class="t num" style="left:1172px;top:279px;width:63px;">0.079</div>
<div class="a" style="left:57px;top:294px;width:1219px;height:15px;background:#fffdf5;"></div>
<div class="a" style="left:57px;top:309px;width:1219px;height:1px;background:#e3e3e6;"></div>
<div class="a" style="left:0px;top:294px;width:56px;height:16px;background:#e1e1e1;"></div>
<div class="a" style="left:56px;top:294px;width:1px;height:16px;background:#f2f2f2;"></div>
<div class="a" style="left:174px;top:294px;width:1px;height:16px;background:#e2e2e2;"></div>
<div class="a" style="left:294px;top:294px;width:1px;height:16px;background:#e2e2e2;"></div>
<div class="a" style="left:451px;top:294px;width:1px;height:16px;background:#e2e2e2;"></div>
<div class="a" style="left:531px;top:294px;width:1px;height:16px;background:#e2e2e2;"></div>
<div class="a" style="left:611px;top:294px;width:1px;height:16px;background:#e2e2e2;"></div>
<div class="a" style="left:691px;top:294px;width:1px;height:16px;background:#e2e2e2;"></div>
<div class="a" style="left:771px;top:294px;width:1px;height:16px;background:#e2e2e2;"></div>
<div class="a" style="left:851px;top:294px;width:1px;height:16px;background:#e2e2e2;"></div>
<div class="a" style="left:931px;top:294px;width:1px;height:16px;background:#e2e2e2;"></div>
<div class="a" style="left:1011px;top:294px;width:1px;height:16px;background:#e2e2e2;"></div>
<div class="a" style="left:1091px;top:294px;width:1px;height:16px;background:#e2e2e2;"></div>
<div class="a" style="left:1171px;top:294px;width:1px;height:16px;background:#e2e2e2;"></div>
<div class="a" style="left:1251px;top:294px;width:1px;height:16px;background:#e2e2e2;"></div>
<div class="t lbl" style="left:179px;top:295px;letter-spacing:0;font-size:10.67px">U 200</div>
<div class="t lbl" style="left:299px;top:295px;letter-spacing:.1px;font-size:10.67px">294,296,297,299</div>
<div class="t num" style="left:452px;top:295px;width:63px;">4</div>
<div class="m g" style="left:520px;top:297px"></div><div class="m b" style="left:520px;top:303px"></div>
<div class="t num" style="left:532px;top:295px;width:63px;">1.400</div>
<div class="t num" style="left:612px;top:295px;width:63px;">0.660</div>
<div class="m g" style="left:680px;top:297px"></div><div class="m b" style="left:680px;top:303px"></div>
<div class="t num" style="left:692px;top:295px;width:63px;">0.005</div>
<div class="t num" style="left:772px;top:295px;width:63px;">25.3</div>
<div class="m g" style="left:840px;top:297px"></div><div class="m b" style="left:840px;top:303px"></div>
<div class="t num" style="left:852px;top:295px;width:63px;">0.035</div>
<div class="t num" style="left:932px;top:295px;width:63px;">5.600</div>
<div class="t num" style="left:1012px;top:295px;width:63px;">3.724</div>
<div class="t num" style="left:1092px;top:295px;width:63px;">0.018</div>
<div class="t num" style="left:1172px;top:295px;width:63px;">0.141</div>
<div class="a" style="left:57px;top:310px;width:1219px;height:15px;background:#ebebeb;"></div>
<div class="a" style="left:57px;top:325px;width:1219px;height:1px;background:#e3e3e6;"></div>
<div class="a" style="left:0px;top:310px;width:56px;height:16px;background:#e1e1e1;"></div>
<div class="a" style="left:56px;top:310px;width:1px;height:16px;background:#f2f2f2;"></div>
<div class="a" style="left:0px;top:309px;width:56px;height:1px;background:#efefef;"></div>
<div class="a" style="left:57px;top:325px;width:1219px;height:1px;background:#dedee0;"></div>
<div class="a" style="left:174px;top:310px;width:1px;height:16px;background:#e2e2e2;"></div>
<div class="a" style="left:294px;top:310px;width:1px;height:16px;background:#e2e2e2;"></div>
<div class="a" style="left:451px;top:310px;width:1px;height:16px;background:#e2e2e2;"></div>
<div class="a" style="left:531px;top:310px;width:1px;height:16px;background:#e2e2e2;"></div>
<div class="a" style="left:611px;top:310px;width:1px;height:16px;background:#e2e2e2;"></div>
<div class="a" style="left:691px;top:310px;width:1px;height:16px;background:#e2e2e2;"></div>
<div class="a" style="left:771px;top:310px;width:1px;height:16px;background:#e2e2e2;"></div>
<div class="a" style="left:851px;top:310px;width:1px;height:16px;background:#e2e2e2;"></div>
<div class="a" style="left:931px;top:310px;width:1px;height:16px;background:#e2e2e2;"></div>
<div class="a" style="left:1011px;top:310px;width:1px;height:16px;background:#e2e2e2;"></div>
<div class="a" style="left:1091px;top:310px;width:1px;height:16px;background:#e2e2e2;"></div>
<div class="a" style="left:1171px;top:310px;width:1px;height:16px;background:#e2e2e2;"></div>
<div class="a" style="left:1251px;top:310px;width:1px;height:16px;background:#e2e2e2;"></div>
<div class="t lbl c" style="left:0px;top:310px;width:53px;letter-spacing:.4px">Total</div>
<div class="t num" style="left:452px;top:311px;width:63px;">28</div>
<div class="t num" style="left:932px;top:311px;width:63px;">32.259</div>
<div class="t num" style="left:1012px;top:311px;width:63px;">20.637</div>
<div class="t num" style="left:1092px;top:311px;width:63px;">0.098</div>
<div class="t num" style="left:1172px;top:311px;width:63px;">0.767</div>
<div class="a" style="left:0px;top:341px;width:56px;height:1px;background:#e1e1e1;"></div>
<div class="a" style="left:57px;top:341px;width:1219px;height:1px;background:#e6e6e8;"></div>
<div class="a" style="left:57px;top:342px;width:1219px;height:15px;background:#fffae8;"></div>
<div class="a" style="left:57px;top:357px;width:1219px;height:1px;background:#e3e3e6;"></div>
<div class="a" style="left:0px;top:342px;width:56px;height:16px;background:#e1e1e1;"></div>
<div class="a" style="left:56px;top:342px;width:1px;height:16px;background:#f2f2f2;"></div>
<div class="a" style="left:174px;top:342px;width:1px;height:16px;background:#e2e2e2;"></div>
<div class="a" style="left:294px;top:342px;width:1px;height:16px;background:#e2e2e2;"></div>
<div class="a" style="left:451px;top:342px;width:1px;height:16px;background:#e2e2e2;"></div>
<div class="a" style="left:531px;top:342px;width:1px;height:16px;background:#e2e2e2;"></div>
<div class="a" style="left:611px;top:342px;width:1px;height:16px;background:#e2e2e2;"></div>
<div class="a" style="left:691px;top:342px;width:1px;height:16px;background:#e2e2e2;"></div>
<div class="a" style="left:771px;top:342px;width:1px;height:16px;background:#e2e2e2;"></div>
<div class="a" style="left:851px;top:342px;width:1px;height:16px;background:#e2e2e2;"></div>
<div class="a" style="left:931px;top:342px;width:1px;height:16px;background:#e2e2e2;"></div>
<div class="a" style="left:1011px;top:342px;width:1px;height:16px;background:#e2e2e2;"></div>
<div class="a" style="left:1091px;top:342px;width:1px;height:16px;background:#e2e2e2;"></div>
<div class="a" style="left:1171px;top:342px;width:1px;height:16px;background:#e2e2e2;"></div>
<div class="a" style="left:1251px;top:342px;width:1px;height:16px;background:#e2e2e2;"></div>
<div class="t lbl c" style="left:0px;top:342px;width:53px;letter-spacing:.4px">4</div>
<div class="t lbl" style="left:61px;top:343px;letter-spacing:0">Baustahl S 235</div>
<div class="t lbl" style="left:179px;top:343px;letter-spacing:0;font-size:10.67px">CHS 73x2</div>
<div class="t lbl" style="left:299px;top:343px;letter-spacing:.1px;font-size:10.67px">307,324</div>
<div class="t num" style="left:452px;top:343px;width:63px;">2</div>
<div class="t num" style="left:532px;top:343px;width:63px;">3.000</div>
<div class="t num" style="left:612px;top:343px;width:63px;">0.229</div>
<div class="t num" style="left:692px;top:343px;width:63px;">0.001</div>
<div class="t num" style="left:772px;top:343px;width:63px;">3.5</div>
<div class="t num" style="left:852px;top:343px;width:63px;">0.011</div>
<div class="t num" style="left:932px;top:343px;width:63px;">6.000</div>
<div class="t num" style="left:1012px;top:343px;width:63px;">1.377</div>
<div class="t num" style="left:1092px;top:343px;width:63px;">0.003</div>
<div class="t num" style="left:1172px;top:343px;width:63px;">0.021</div>
<div class="a" style="left:57px;top:358px;width:1219px;height:15px;background:#ebebeb;"></div>
<div class="a" style="left:57px;top:373px;width:1219px;height:1px;background:#e3e3e6;"></div>
<div class="a" style="left:0px;top:358px;width:56px;height:16px;background:#e1e1e1;"></div>
<div class="a" style="left:56px;top:358px;width:1px;height:16px;background:#f2f2f2;"></div>
<div class="a" style="left:0px;top:357px;width:56px;height:1px;background:#efefef;"></div>
<div class="a" style="left:57px;top:373px;width:1219px;height:1px;background:#dedee0;"></div>
<div class="a" style="left:174px;top:358px;width:1px;height:16px;background:#e2e2e2;"></div>
<div class="a" style="left:294px;top:358px;width:1px;height:16px;background:#e2e2e2;"></div>
<div class="a" style="left:451px;top:358px;width:1px;height:16px;background:#e2e2e2;"></div>
<div class="a" style="left:531px;top:358px;width:1px;height:16px;background:#e2e2e2;"></div>
<div class="a" style="left:611px;top:358px;width:1px;height:16px;background:#e2e2e2;"></div>
<div class="a" style="left:691px;top:358px;width:1px;height:16px;background:#e2e2e2;"></div>
<div class="a" style="left:771px;top:358px;width:1px;height:16px;background:#e2e2e2;"></div>
<div class="a" style="left:851px;top:358px;width:1px;height:16px;background:#e2e2e2;"></div>
<div class="a" style="left:931px;top:358px;width:1px;height:16px;background:#e2e2e2;"></div>
<div class="a" style="left:1011px;top:358px;width:1px;height:16px;background:#e2e2e2;"></div>
<div class="a" style="left:1091px;top:358px;width:1px;height:16px;background:#e2e2e2;"></div>
<div class="a" style="left:1171px;top:358px;width:1px;height:16px;background:#e2e2e2;"></div>
<div class="a" style="left:1251px;top:358px;width:1px;height:16px;background:#e2e2e2;"></div>
<div class="t lbl c" style="left:0px;top:358px;width:53px;letter-spacing:.4px">Total</div>
<div class="t num" style="left:452px;top:359px;width:63px;">2</div>
<div class="t num" style="left:932px;top:359px;width:63px;">6.000</div>
<div class="t num" style="left:1012px;top:359px;width:63px;">1.377</div>
<div class="t num" style="left:1092px;top:359px;width:63px;">0.003</div>
<div class="t num" style="left:1172px;top:359px;width:63px;">0.021</div>
<div class="a" style="left:1276px;top:76px;width:17px;height:310px;background:#f0f0f0;"></div>
<div class="a" style="left:1276px;top:76px;width:1px;height:310px;background:#fff;"></div>
<div class="a" style="left:1277px;top:287px;width:15px;height:72px;background:#c8c8c8;"></div>
<svg class="a" style="left:1280px;top:81px" width="9" height="8" viewBox="0 0 9 8"><path d="M1.2 6 L4.5 2.4 L7.8 6" fill="none" stroke="#505050" stroke-width="2"/></svg>
<svg class="a" style="left:1280px;top:373px" width="9" height="8" viewBox="0 0 9 8"><path d="M1.2 2 L4.5 5.6 L7.8 2" fill="none" stroke="#505050" stroke-width="2"/></svg>
<div class="a" style="left:0px;top:386px;width:1276px;height:15px;background:#f0f0f0;"></div>
<div class="a" style="left:14px;top:386px;width:978px;height:15px;background:#c8c8c8;"></div>
<svg class="a" style="left:1px;top:389px" width="8" height="9" viewBox="0 0 8 9"><path d="M6 1.2 L2.4 4.5 L6 7.8" fill="none" stroke="#505050" stroke-width="2"/></svg>
<svg class="a" style="left:1264px;top:389px" width="8" height="9" viewBox="0 0 8 9"><path d="M2 1.2 L5.6 4.5 L2 7.8" fill="none" stroke="#505050" stroke-width="2"/></svg>
<div class="a" style="left:1276px;top:386px;width:17px;height:15px;background:#f4f4f4;"></div>
<div class="a" style="left:0px;top:401px;width:1293px;height:1px;background:#fcfcfc;"></div>
<div class="a" style="left:0px;top:402px;width:1293px;height:1px;background:#c8c8d6;"></div>
<div class="a" style="left:0px;top:403px;width:1293px;height:21px;background:#f7f7f7;"></div>
<div class="a" style="left:0px;top:403px;width:121px;height:1px;background:#fff;"></div>
<div class="a" style="left:120px;top:403px;width:1px;height:21px;background:#fff;"></div>
<div class="a" style="left:121px;top:402px;width:1px;height:22px;background:#c8c8d6;"></div>
<svg class="a" style="left:1px;top:410px" width="8" height="7" viewBox="0 0 8 7"><rect x="0" y="0" width="1.8" height="7" fill="#8c8c8c"/><path d="M7.3 0 L2.6 3.5 L7.3 7 Z" fill="#8c8c8c"/></svg>
<svg class="a" style="left:19px;top:410px" width="6" height="7" viewBox="0 0 6 7"><path d="M5.6 0 L0.6 3.5 L5.6 7 Z" fill="#8c8c8c"/></svg>
<div class="t lbl" style="left:44px;top:406px;font-size:11.5px;letter-spacing:0">1 of 2</div>
<svg class="a" style="left:93px;top:410px" width="6" height="7" viewBox="0 0 6 7"><path d="M0.4 0 L5.4 3.5 L0.4 7 Z" fill="#444"/></svg>
<svg class="a" style="left:109px;top:410px" width="8" height="7" viewBox="0 0 8 7"><rect x="5.4" y="0" width="1.9" height="7" fill="#444"/><path d="M0.2 0 L5 3.5 L0.2 7 Z" fill="#444"/></svg>
<div class="a" style="left:122px;top:401px;width:123px;height:23px;background:#fff;"></div>
<div class="t lbl" style="left:130px;top:407px;font-size:11.5px;letter-spacing:0;-webkit-text-stroke:.1px #000">Members by Material</div>
<div class="a" style="left:245px;top:402px;width:90px;height:21px;background:#f0f0f0;border:1px solid #cfcfda"></div>
<div class="a" style="left:245px;top:423px;width:90px;height:1px;background:#fff;"></div>
<div class="t lbl" style="left:253px;top:406px;font-size:11.5px;letter-spacing:.05px;-webkit-text-stroke:.1px #000">All by Material</div>
</body></html>
